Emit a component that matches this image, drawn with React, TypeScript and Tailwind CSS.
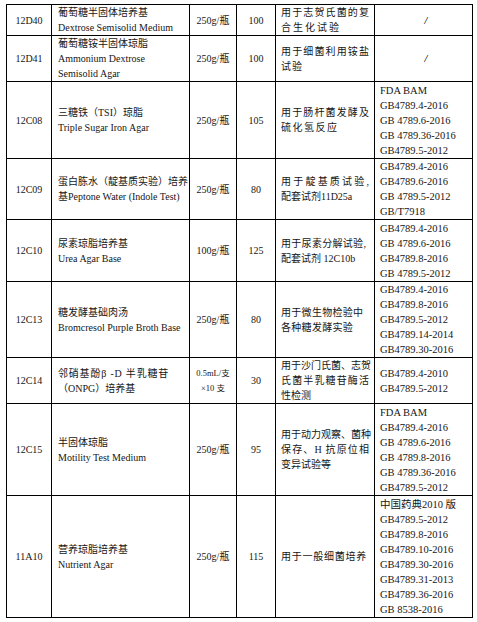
import React from "react";

type Line = { t: string; j?: boolean; tr?: string };

type Row = {
  code: string;
  h: string;
  name: string[];
  spec: string[];
  price: string;
  use: Line[];
  std: string[];
};

const rows: Row[] = [
  {
    code: "12D40",
    h: "h-[31px]",
    name: ["葡萄糖半固体培养基", "Dextrose Semisolid Medium"],
    spec: ["250g/瓶"],
    price: "100",
    use: [{ t: "用于志贺氏菌的复", j: true }, { t: "合生化试验", tr: "tracking-[2px]" }],
    std: ["/"],
  },
  {
    code: "12D41",
    h: "h-[46px]",
    name: ["葡萄糖铵半固体琼脂", "Ammonium Dextrose", "Semisolid Agar"],
    spec: ["250g/瓶"],
    price: "100",
    use: [{ t: "用于细菌利用铵盐", j: true }, { t: "试验", tr: "tracking-[1px]" }],
    std: ["/"],
  },
  {
    code: "12C08",
    h: "h-[77px]",
    name: ["三糖铁（TSI）琼脂", "Triple Sugar Iron Agar"],
    spec: ["250g/瓶"],
    price: "105",
    use: [{ t: "用于肠杆菌发酵及", j: true }, { t: "硫化氢反应", tr: "tracking-[1.5px]" }],
    std: ["FDA BAM", "GB4789.4-2016", "GB 4789.6-2016", "GB 4789.36-2016", "GB4789.5-2012"],
  },
  {
    code: "12C09",
    h: "h-[61px]",
    name: ["蛋白胨水（靛基质实验）培养", "基Peptone Water (Indole Test)"],
    spec: ["250g/瓶"],
    price: "80",
    use: [{ t: "用于靛基质试验,", j: true }, { t: "配套试剂11D25a" }],
    std: ["GB4789.4-2016", "GB4789.6-2016", "GB 4789.5-2012", "GB/T7918"],
  },
  {
    code: "12C10",
    h: "h-[62px]",
    name: ["尿素琼脂培养基", "Urea Agar Base"],
    spec: ["100g/瓶"],
    price: "125",
    use: [{ t: "用于尿素分解试验,", tr: "tracking-[0.3px]" }, { t: "配套试剂 12C10b" }],
    std: ["GB4789.4-2016", "GB 4789.6-2016", "GB4789.8-2016", "GB 4789.5-2012"],
  },
  {
    code: "12C13",
    h: "h-[76px]",
    name: ["糖发酵基础肉汤", "Bromcresol Purple Broth Base"],
    spec: ["250g/瓶"],
    price: "80",
    use: [
      { t: "用于微生物检验中", tr: "tracking-[0.3px]" },
      { t: "各种糖发酵实验", tr: "tracking-[0.3px]" },
    ],
    std: ["GB4789.4-2016", "GB4789.8-2016", "GB4789.5-2012", "GB4789.14-2014", "GB4789.30-2016"],
  },
  {
    code: "12C14",
    h: "h-[46px]",
    name: ["邻硝基酚β -D 半乳糖苷", "（ONPG）培养基"],
    spec: ["0.5mL/支", "×10 支"],
    price: "30",
    use: [{ t: "用于沙门氏菌、志贺", j: true }, { t: "氏菌半乳糖苷酶活", j: true }, { t: "性检测" }],
    std: ["GB4789.4-2010", "GB4789.5-2012"],
  },
  {
    code: "12C15",
    h: "h-[92px]",
    name: ["半固体琼脂", "Motility Test Medium"],
    spec: ["250g/瓶"],
    price: "95",
    use: [{ t: "用于动力观察、菌种", j: true }, { t: "保存、H 抗原位相", j: true }, { t: "变异试验等" }],
    std: ["FDA BAM", "GB4789.4-2016", "GB 4789.6-2016", "GB 4789.8-2016", "GB 4789.36-2016", "GB4789.5-2012"],
  },
  {
    code: "11A10",
    h: "h-[122px]",
    name: ["营养琼脂培养基", "Nutrient Agar"],
    spec: ["250g/瓶"],
    price: "115",
    use: [{ t: "用于一般细菌培养", tr: "tracking-[0.75px]" }],
    std: [
      "中国药典2010 版",
      "GB4789.5-2012",
      "GB4789.8-2016",
      "GB4789.10-2016",
      "GB4789.30-2016",
      "GB4789.31-2013",
      "GB4789.36-2016",
      "GB 8538-2016",
    ],
  },
];

const cell = "border border-black align-middle p-0";

export default function App() {
  return (
    <div className="min-h-[622px] w-[477px] bg-white pl-[6px] pt-[4px] text-[#161616] [font-family:'Liberation_Serif','Noto_Sans_CJK_SC',serif]">
      <table className="w-[466px] table-fixed border-collapse">
        <colgroup>
          <col className="w-[45px]" />
          <col className="w-[138px]" />
          <col className="w-[47px]" />
          <col className="w-[39px]" />
          <col className="w-[99px]" />
          <col className="w-[98px]" />
        </colgroup>
        <tbody>
          {rows.map((r) => (
            <tr key={r.code} className={r.h}>
              <td className={`${cell} text-center text-[10px]`}>{r.code}</td>
              <td className={`${cell} pl-[6px] text-[10px] leading-[15px] whitespace-nowrap`}>
                {r.name.map((n, i) => (
                  <div key={n} className={r.code === "12C14" && i === 0 ? "tracking-[0.8px]" : ""}>
                    {n}
                  </div>
                ))}
              </td>
              <td className={`${cell} text-center`}>
                {r.spec.length > 1 ? (
                  <div className="text-[8.5px] leading-[15px]">
                    {r.spec.map((s) => (
                      <div key={s}>{s}</div>
                    ))}
                  </div>
                ) : (
                  <div className="text-[10px]">{r.spec[0]}</div>
                )}
              </td>
              <td className={`${cell} text-center text-[10px]`}>{r.price}</td>
              <td className={`${cell} px-[5px] text-[10px] leading-[15px]`}>
                {r.use.map((u) => (
                  <div
                    key={u.t}
                    className={`whitespace-nowrap ${u.j ? "text-justify [text-align-last:justify]" : ""} ${u.tr ?? ""}`}
                  >
                    {u.t}
                  </div>
                ))}
              </td>
              <td className={`${cell} pl-[5px] text-[10.5px] leading-[15px]`}>
                {r.std.length === 1 && r.std[0] === "/" ? (
                  <div className="text-center font-bold italic">/</div>
                ) : (
                  r.std.map((s) => <div key={s}>{s}</div>)
                )}
              </td>
            </tr>
          ))}
        </tbody>
      </table>
    </div>
  );
}
